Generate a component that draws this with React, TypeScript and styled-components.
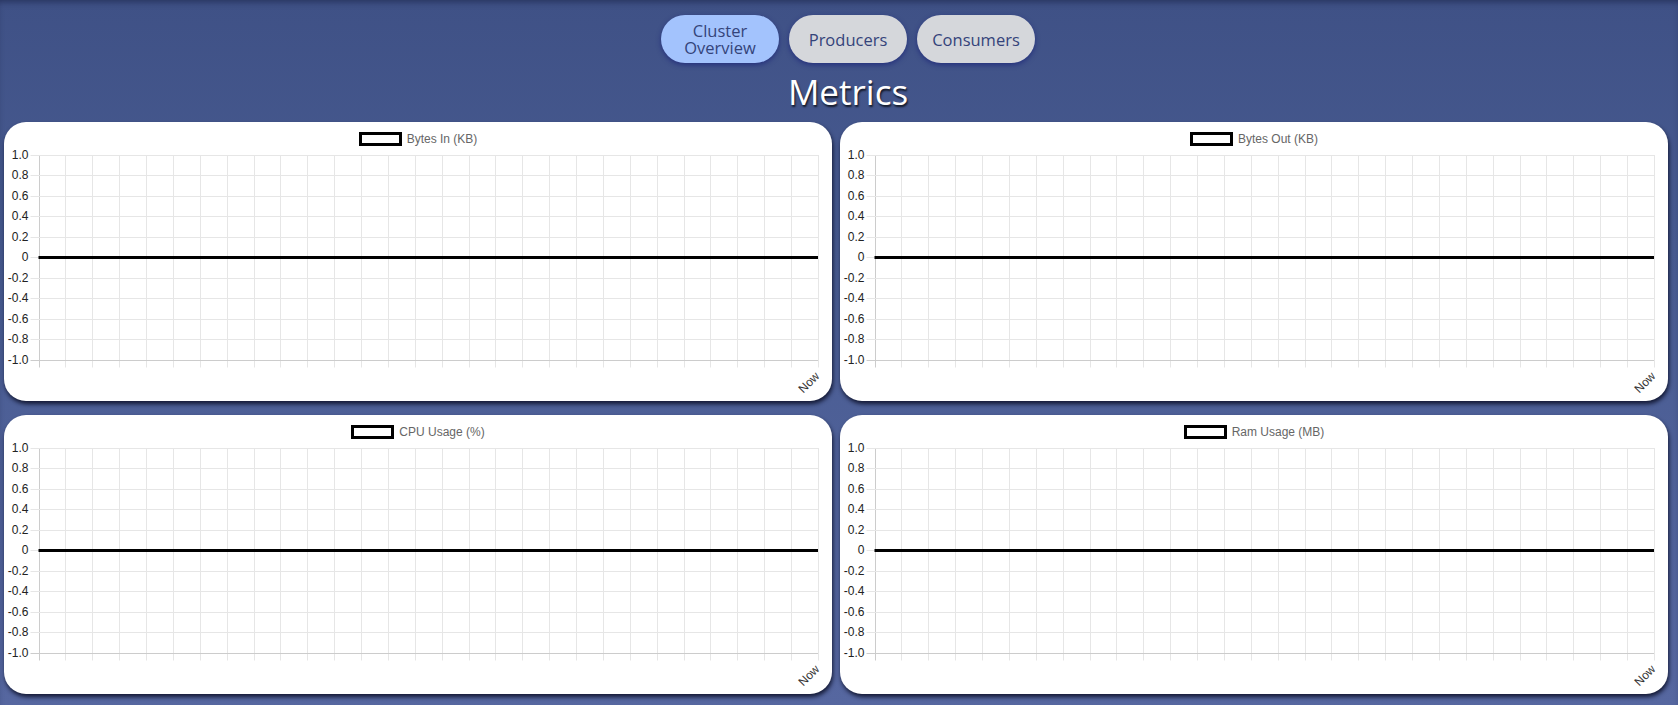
import React from "react";
import styled, { createGlobalStyle } from "styled-components";

const GlobalStyle = createGlobalStyle`
  html, body {
    margin: 0;
    padding: 0;
  }
  body {
    min-height: 100vh;
    background: linear-gradient(to bottom, #3f5186 0%, #485b91 35%, #5667a0 100%);
    box-shadow: inset 0 5px 6px -3px rgba(20, 28, 60, 0.55);
    overflow: hidden;
  }
`;

const Page = styled.div`
  display: flex;
  flex-direction: column;
  padding-top: 15px;
`;

const Nav = styled.nav`
  display: flex;
  justify-content: center;
  gap: 10px;
  padding-left: 18px;
`;

const NavButton = styled.button<{ $active?: boolean }>`
  width: 118px;
  height: 48px;
  border: none;
  border-radius: 24px;
  background: ${(p) => (p.$active ? "#a3c3fd" : "#d5d7db")};
  color: #34437a;
  font-family: "Open Sans", "DejaVu Sans", sans-serif;
  font-size: 16.5px;
  line-height: 17px;
  padding: 0 12px;
  box-shadow: 0 2px 5px rgba(28, 38, 120, 0.75);
  cursor: pointer;
`;

const Title = styled.h1`
  margin: 8px 0 0;
  padding-left: 18px;
  text-align: center;
  font-family: "Open Sans", "DejaVu Sans", sans-serif;
  font-weight: 400;
  font-size: 35px;
  line-height: 42px;
  color: #ffffff;
  text-shadow: 1px 2px 2px rgba(0, 0, 0, 0.75);
`;

const Grid = styled.main`
  display: grid;
  grid-template-columns: 1fr 1fr;
  gap: 14px 8px;
  padding: 9px 10px 12px 4px;
`;

const Card = styled.section`
  height: 279px;
  background: #ffffff;
  border-radius: 22px;
  box-shadow: 1px 3px 4px rgba(8, 12, 35, 0.85);
  display: flex;
  flex-direction: column;
  overflow: hidden;
`;

const Legend = styled.div`
  display: flex;
  justify-content: center;
  align-items: center;
  gap: 5px;
  margin-top: 10px;
  height: 14px;
  font-family: "Liberation Sans", Arial, sans-serif;
  font-size: 12px;
  color: #666666;
`;

const LegendBox = styled.span`
  display: block;
  width: 37px;
  height: 8px;
  border: 3px solid #000000;
  background: #ffffff;
`;

const ChartSvg = styled.svg`
  display: block;
  overflow: visible;
  font-family: "Liberation Sans", Arial, sans-serif;
  font-size: 12px;
`;

const W = 828;
const H = 255;
const AXIS_X = 34.5;
const RIGHT_X = 814;
const TOP_Y = 9;
const STEP_Y = 20.45;
const POINTS = 30;

const yTicks = ["1.0", "0.8", "0.6", "0.4", "0.2", "0", "-0.2", "-0.4", "-0.6", "-0.8", "-1.0"];

const LineChart: React.FC<{ label: string }> = ({ label }) => {
  const stepX = (RIGHT_X - AXIS_X) / (POINTS - 1);
  const bottom = TOP_Y + STEP_Y * 10;
  const zeroY = TOP_Y + STEP_Y * 5;

  return (
    <Card>
      <Legend>
        <LegendBox />
        {label}
      </Legend>
      <ChartSvg width={W} height={H} viewBox={`0 0 ${W} ${H}`}>
        {Array.from({ length: POINTS }).map((_, i) => {
          const x = Math.round(AXIS_X + i * stepX) + 0.5;
          return (
            <line
              key={"v" + i}
              x1={x}
              x2={x}
              y1={TOP_Y}
              y2={bottom + 8}
              stroke={i === 0 ? "#cccccc" : "#e6e6e6"}
              strokeWidth={1}
            />
          );
        })}
        {yTicks.map((t, i) => {
          const y = Math.round(TOP_Y + i * STEP_Y) + 0.5;
          return (
            <g key={t}>
              <line
                x1={AXIS_X - 8}
                x2={RIGHT_X}
                y1={y}
                y2={y}
                stroke={i === 10 ? "#cccccc" : "#e6e6e6"}
                strokeWidth={1}
              />
              <text x={AXIS_X - 10} y={y} textAnchor="end" dominantBaseline="middle" fill="#222">
                {t}
              </text>
            </g>
          );
        })}
        <line x1={AXIS_X} x2={RIGHT_X} y1={Math.round(zeroY) + 0.5} y2={Math.round(zeroY) + 0.5} stroke="#000" strokeWidth={3} />
        <text
          transform={`translate(${RIGHT_X}, ${bottom + 15}) rotate(-45)`}
          textAnchor="end"
          dominantBaseline="middle"
          fill="#333"
        >
          Now
        </text>
      </ChartSvg>
    </Card>
  );
};

const charts = ["Bytes In (KB)", "Bytes Out (KB)", "CPU Usage (%)", "Ram Usage (MB)"];

export default function App() {
  return (
    <>
      <GlobalStyle />
      <Page>
        <Nav>
          <NavButton $active>Cluster Overview</NavButton>
          <NavButton>Producers</NavButton>
          <NavButton>Consumers</NavButton>
        </Nav>
        <Title>Metrics</Title>
        <Grid>
          {charts.map((c) => (
            <LineChart key={c} label={c} />
          ))}
        </Grid>
      </Page>
    </>
  );
}
